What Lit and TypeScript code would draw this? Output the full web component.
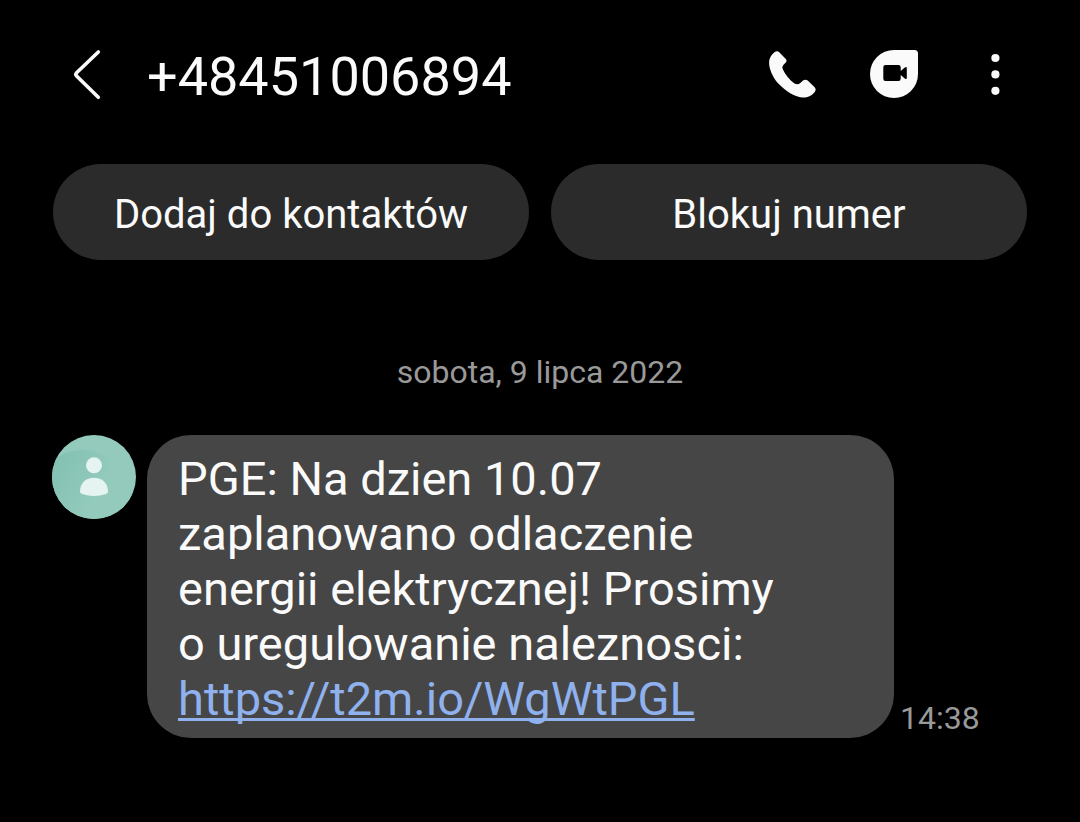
import { LitElement, html, css } from "lit";
import { customElement, property } from "lit/decorators.js";

@customElement("chat-header")
class ChatHeader extends LitElement {
  @property() number = "";

  static styles = css`
    :host { display: block; }
    .bar { display: flex; align-items: center; color: #fafafa; }
    button { display: block; padding: 0; border: 0; background: none; color: inherit; cursor: pointer; }
    svg { display: block; }
    .number { flex: 1; margin: 0 0 0 43px; padding-top: 6px; font-size: 54px; line-height: 56px; font-weight: 400; }
    .actions { display: flex; align-items: center; gap: 53px; }
  `;

  render() {
    return html`
      <header class="bar">
        <button aria-label="Wstecz">
          <svg width="32" height="52" viewBox="0 0 32 52" fill="none" stroke="currentColor" stroke-width="3.6" stroke-linecap="round" stroke-linejoin="round"><path d="M26.300 4 4.600 24.800q-1.600 1.600 0 3.200L26.300 49.300" /></svg>
        </button>
        <h1 class="number">${this.number}</h1>
        <div class="actions">
          <button aria-label="Zadzwoń">
            <svg width="48" height="48" viewBox="0 0 48 48" fill="currentColor"><path d="M5.800 2Q8.300.4 10.500 2.500L17 9.200Q18.300 10.800 17 12.300L14.500 14.700Q12.600 16.600 13.800 19.200C16.500 25.200 20.800 30 25.500 33.400Q28.800 35.200 31.300 33L34 30.600Q36.500 28.700 38.700 30.600L45.400 37Q47.600 39.300 45.900 41.700C43.400 45.400 38.800 47.500 34.200 47.500C26.300 47.500 16 40.800 8.800 33C3.600 26.800.1 19 .1 12.700C.1 8.300 2.600 4.200 5.800 2Z" /></svg>
          </button>
          <button aria-label="Rozmowa wideo">
            <svg width="48" height="48" viewBox="0 0 48 48"><path fill="currentColor" d="M24 0h20.500Q48 0 48 3.500V24A24 24 0 1 1 24 0Z" /><path fill="#000" d="M15.500 15H28.500Q30.700 15 30.700 17.200V21L34.800 17.500Q36.800 16 36.800 18.300V27.700Q36.800 30 34.800 28.500L30.700 25V28.800Q30.700 31 28.500 31H15.500Q13.300 31 13.300 28.800V17.200Q13.300 15 15.500 15Z" /></svg>
          </button>
          <button aria-label="Więcej opcji">
            <svg width="48" height="48" viewBox="0 0 48 48" fill="currentColor"><circle cx="24.400" cy="8" r="4.100" /><circle cx="24.400" cy="24.400" r="4.100" /><circle cx="24.400" cy="40.800" r="4.100" /></svg>
          </button>
        </div>
      </header>
    `;
  }
}

@customElement("app-root")
class AppRoot extends LitElement {
  static styles = css`
    :host { display: block; box-sizing: border-box; min-height: 100vh; padding: 43px 52px; background: #000; color: #fafafa; font-family: Roboto, sans-serif; }
    chat-header { padding: 0 9px 0 20px; }
    .choices { display: grid; grid-template-columns: 1fr 1fr; gap: 22px; margin: 59px 1px 0; }
    .choice { height: 96px; padding: 6px 0 0; border: 0; border-radius: 48px; background: #2b2b2b; color: inherit; font: 40px/48px Roboto, sans-serif; cursor: pointer; }
    .date { margin: 92px 0 0; text-align: center; font-size: 32px; line-height: 40px; color: #999; }
    .message { display: flex; margin-top: 43px; }
    .avatar { flex: none; width: 84px; height: 84px; margin-right: 11px; }
    .bubble { flex: 0 1 747px; box-sizing: border-box; margin: 0; padding: 16px 31px 12px; border-radius: 44px; background: #464646; font-size: 47px; line-height: 55px; }
    .bubble a { color: #8fb1ee; text-decoration: underline; text-decoration-thickness: 3px; text-underline-offset: 3px; text-decoration-skip-ink: none; }
    .time { align-self: flex-end; margin-left: 6px; font-size: 32px; line-height: 40px; color: #999; }
  `;

  render() {
    return html`
      <chat-header number="+48451006894"></chat-header>
      <div class="choices">
        <button class="choice">Dodaj do kontaktów</button>
        <button class="choice">Blokuj numer</button>
      </div>
      <p class="date">sobota, 9 lipca 2022</p>
      <div class="message">
        <svg class="avatar" viewBox="0 0 84 84" aria-hidden="true">
          <defs>
            <linearGradient id="wave" x1="0" y1="0" x2="1" y2="0.5"><stop offset="0" stop-color="#81c0b2" /><stop offset="0.7" stop-color="#93cabc" /></linearGradient>
            <clipPath id="disc"><circle cx="42" cy="42" r="42" /></clipPath>
          </defs>
          <g clip-path="url(#disc)">
            <rect width="84" height="84" fill="#93cabc" />
            <path fill="url(#wave)" d="M0 26C16 12 42 12 54 22C67 32 67 56 84 62V84H0Z" />
          </g>
          <circle cx="42" cy="30.300" r="8" fill="#e6f4f1" />
          <path fill="#e6f4f1" d="M28 56.500C28 48 34 42.800 42 42.800S56 48 56 56.500Q56 58.300 54 59Q42 63 30 59Q28 58.300 28 56.500Z" />
        </svg>
        <p class="bubble">PGE: Na dzien 10.07<br />zaplanowano odlaczenie<br />energii elektrycznej! Prosimy<br />o uregulowanie naleznosci:<br /><a href="https://t2m.io/WgWtPGL">https://t2m.io/WgWtPGL</a></p>
        <time class="time" datetime="14:38">14:38</time>
      </div>
    `;
  }
}
